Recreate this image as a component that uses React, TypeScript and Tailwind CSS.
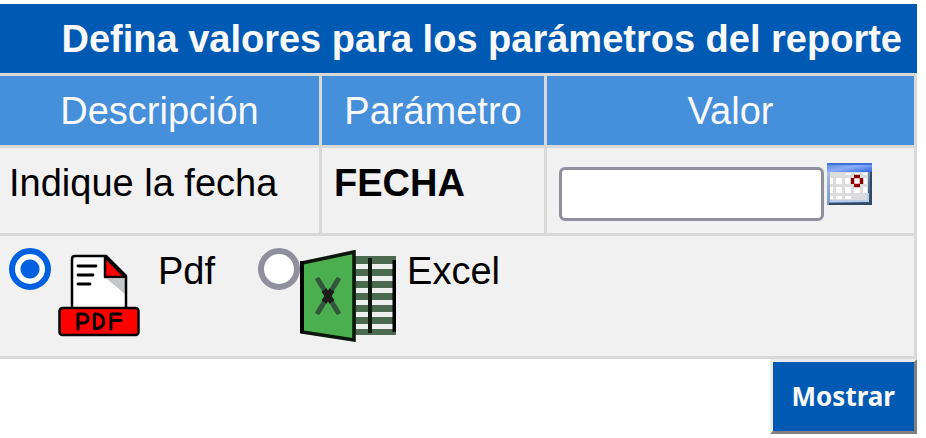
import { useState } from "react";

const PdfIcon = () => (
  <svg viewBox="0 0 96 96" className="h-24 w-24 shrink-0" aria-hidden="true">
    <path d="M21 61V11q0-3 3-3h31l20 20v33z" fill="#fff" />
    <path d="M56 31h18v15z" fill="#c4c6c7" />
    <path d="M54 9v20h20z" fill="#f00" stroke="#000" strokeWidth="2.5" strokeLinejoin="round" />
    <path d="M21 61V11q0-3 3-3h31l20 20v33" fill="none" stroke="#000" strokeWidth="2.5" strokeLinejoin="round" />
    <path d="M27 18h18M27 27h15M27 36h12" stroke="#000" strokeWidth="2.8" strokeLinecap="round" />
    <rect x="8.5" y="60" width="79" height="27" rx="3" fill="#f00" stroke="#000" strokeWidth="2.5" />
    <path
      d="M27 81V66h5.500a4.500 4.500 0 0 1 0 9H27M43.500 66v14.500h2a7.250 7.250 0 0 0 0-14.500zM60 81V66h10M60 72.500h10"
      fill="none"
      stroke="#000"
      strokeWidth="3"
      strokeLinecap="round"
      strokeLinejoin="round"
    />
  </svg>
);

const ExcelIcon = () => (
  <svg viewBox="0 0 96 96" className="h-24 w-24 shrink-0" aria-hidden="true">
    <defs>
      <filter id="xlSoft" x="-10%" y="-10%" width="120%" height="120%">
        <feGaussianBlur stdDeviation="0.7" />
      </filter>
    </defs>
    <g filter="url(#xlSoft)">
      <rect x="54" y="8" width="43" height="79" fill="#4b6a50" />
      {[16, 28, 40, 52, 64, 76].map((y) => (
        <rect key={y} x="56" y={y} width="37" height="5" fill="#eef0ee" />
      ))}
      <path d="M70 10v75" stroke="#101510" strokeWidth="4" />
      <path d="M94.500 12v72" stroke="#000" strokeWidth="4" />
      <path d="M2 15 54 4v88L2 84z" fill="#4caf50" stroke="#0a140a" strokeWidth="3.500" />
      <path d="M2 13v72" stroke="#000" strokeWidth="4" />
      <path d="M17 30 39 66M39 30 17 66" stroke="#33553a" strokeWidth="5" />
      <path d="M24 42l8 12M32 42l-8 12" stroke="#1b1f1b" strokeWidth="6" />
    </g>
  </svg>
);

const CalendarIcon = () => (
  <svg viewBox="0 0 45 44" className="block h-11 w-[45px]" aria-hidden="true">
    <defs>
      <linearGradient id="calTop" x1="0" y1="0" x2="1" y2="1">
        <stop offset="0" stopColor="#5685df" />
        <stop offset="0.5" stopColor="#8aaef5" />
        <stop offset="1" stopColor="#2b62e0" />
      </linearGradient>
      <linearGradient id="calEdge" x1="0" y1="0" x2="1" y2="1">
        <stop offset="0" stopColor="#b4c9e8" />
        <stop offset="0.5" stopColor="#7d9cc6" />
        <stop offset="1" stopColor="#2b4263" />
      </linearGradient>
      <filter id="calSoft">
        <feGaussianBlur stdDeviation="0.6" />
      </filter>
    </defs>
    <rect y="1" width="45" height="42" fill="url(#calEdge)" />
    <path d="M43 10h2v33H2v-2h41z" fill="#344963" />
    <rect x="3" y="10" width="38" height="29" fill="#dcdcde" />
    <path d="M3 39h38V31" fill="none" stroke="#b7cdec" strokeWidth="2" />
    <rect y="1" width="45" height="9" fill="url(#calTop)" />
    <path d="M0 2h45" stroke="#3f6fd6" strokeWidth="2" />
    <g filter="url(#calSoft)">
      <g fill="#fff">
        <path d="M19 11h5v2h-5zM28 11h5v2h-5zM36 11h4v2h-4z" />
        <path d="M3 16h3v6H3zM9 16h6v6H9zM18 16h6v6h-6zM36 16h4v6h-4z" />
        <path d="M3 25h3v6H3zM9 25h6v6H9zM18 25h6v6h-6zM27 25h6v6h-6zM36 25h4v6h-4z" />
        <path d="M3 34h3v3H3zM9 34h6v3H9zM18 34h6v3h-6z" />
        <rect x="27" y="16" width="6" height="6" />
      </g>
      <path d="M27 14.500h6M27 23.500h6M25.500 16v6M34.500 16v6" stroke="#8e0000" strokeWidth="3.500" />
    </g>
  </svg>
);

const radioClass =
  "h-[42px] w-[42px] shrink-0 appearance-none rounded-full border-6 border-[#8f8f9d] bg-white checked:border-[#0060df] checked:bg-[radial-gradient(circle,#0060df_9px,#fff_10px)]";

const headClass = "border-r-3 border-b-3 border-[#d9d9d9] bg-[#468fdb] pt-[13px] pb-[11px] font-normal text-[#f9f9fb]";
const cellClass = "border-r-3 border-b-3 border-[#d9d9d9] bg-[#f1f1f1] align-top";

export default function App() {
  const [fecha, setFecha] = useState("");
  const [formato, setFormato] = useState("pdf");

  return (
    <form
      className="mr-[9px] pt-1 font-['Liberation_Sans',Arial,sans-serif] text-[38px] leading-[45px] text-black"
      onSubmit={(e) => e.preventDefault()}
    >
      <table className="w-full table-fixed border-separate border-spacing-0">
        <caption className="border-b-3 border-[#d9d9d9] bg-[#0059b3] pt-[13px] pr-[15px] pb-[11px] text-right font-bold whitespace-nowrap text-[#f9f9fb]">
          Defina valores para los parámetros del reporte
        </caption>
        <colgroup>
          <col className="w-[322px]" />
          <col className="w-[225px]" />
          <col />
        </colgroup>
        <thead>
          <tr>
            <th className={headClass}>Descripción</th>
            <th className={headClass}>Parámetro</th>
            <th className={headClass}>Valor</th>
          </tr>
        </thead>
        <tbody>
          <tr>
            <td className={`${cellClass} pt-[13px] pl-[9px]`}>
              <label htmlFor="fecha">Indique la fecha</label>
            </td>
            <td className={`${cellClass} pt-[13px] pl-3 font-bold`}>FECHA</td>
            <td className={`${cellClass} pt-[14px] pb-3 pl-3`}>
              <div className="flex items-start gap-[3px]">
                <input
                  id="fecha"
                  type="text"
                  value={fecha}
                  onChange={(e) => setFecha(e.target.value)}
                  className="mt-[5px] h-[54px] w-[265px] rounded-md border-3 border-[#8f8f9d] bg-white px-1"
                />
                <button type="button" aria-label="Calendario">
                  <CalendarIcon />
                </button>
              </div>
            </td>
          </tr>
          <tr>
            <td colSpan={3} className={`${cellClass} py-3 pl-[9px]`}>
              <div className="flex items-start leading-[47px]">
                <input
                  id="pdf"
                  type="radio"
                  name="formato"
                  checked={formato === "pdf"}
                  onChange={() => setFormato("pdf")}
                  className={radioClass}
                />
                <label htmlFor="pdf" className="mr-[43px] flex items-start gap-[11px]">
                  <PdfIcon />
                  Pdf
                </label>
                <input
                  id="excel"
                  type="radio"
                  name="formato"
                  checked={formato === "excel"}
                  onChange={() => setFormato("excel")}
                  className={radioClass}
                />
                <label htmlFor="excel" className="flex items-start gap-[11px]">
                  <ExcelIcon />
                  Excel
                </label>
              </div>
            </td>
          </tr>
        </tbody>
      </table>
      <div className="flex justify-end">
        <button
          type="submit"
          className="border-3 border-t-[#ececec] border-r-[#808080] border-b-[#808080] border-l-[#ececec] bg-[#0059b3] px-[19px] py-3 font-['Noto_Sans',sans-serif] text-[26px] leading-[45px] font-bold text-[#f9f9fb]"
        >
          Mostrar
        </button>
      </div>
    </form>
  );
}
